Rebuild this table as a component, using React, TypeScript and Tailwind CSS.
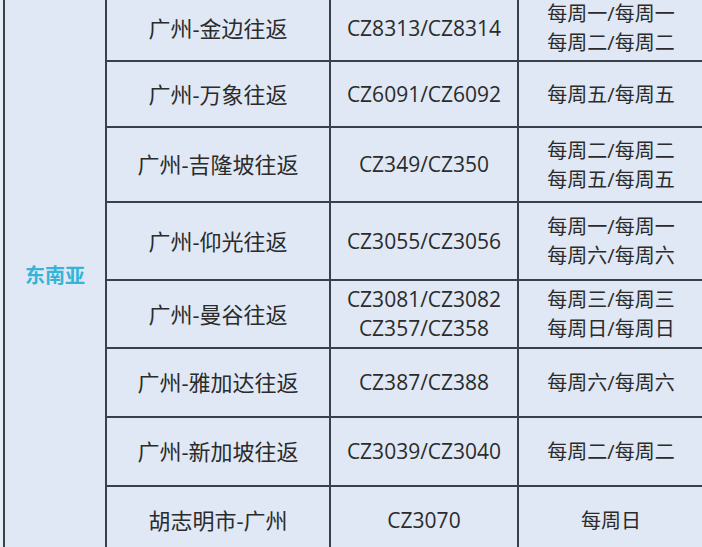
type Route = {
  route: string;
  flights: string[];
  days: string[];
  height: string;
};

const routes: Route[] = [
  { route: '广州-金边往返', flights: ['CZ8313/CZ8314'], days: ['每周一/每周一', '每周二/每周二'], height: 'h-[64px]' },
  { route: '广州-万象往返', flights: ['CZ6091/CZ6092'], days: ['每周五/每周五'], height: 'h-[64px]' },
  { route: '广州-吉隆坡往返', flights: ['CZ349/CZ350'], days: ['每周二/每周二', '每周五/每周五'], height: 'h-[73px]' },
  { route: '广州-仰光往返', flights: ['CZ3055/CZ3056'], days: ['每周一/每周一', '每周六/每周六'], height: 'h-[76px]' },
  { route: '广州-曼谷往返', flights: ['CZ3081/CZ3082', 'CZ357/CZ358'], days: ['每周三/每周三', '每周日/每周日'], height: 'h-[66px]' },
  { route: '广州-雅加达往返', flights: ['CZ387/CZ388'], days: ['每周六/每周六'], height: 'h-[67px]' },
  { route: '广州-新加坡往返', flights: ['CZ3039/CZ3040'], days: ['每周二/每周二'], height: 'h-[67px]' },
  { route: '胡志明市-广州', flights: ['CZ3070'], days: ['每周日'], height: 'h-[66px]' },
];

const cell = 'bg-[#dfe8f4] flex flex-col items-center justify-center text-center text-[#2b2b2b]';

export default function App() {
  return (
    <div
      className="w-[702px] h-[547px] overflow-hidden bg-[#e6eef8]"
      style={{ fontFamily: '"Open Sans", "Noto Sans CJK SC", sans-serif' }}
    >
      <div className="ml-[3px] -mt-[6px] w-[720px] grid grid-cols-[100px_222px_186px_1fr] gap-[2px] p-[2px] bg-[#38404a]">
        <div className={`${cell} row-span-8`}>
          <span className="text-[20px] font-bold text-[#35b4d8] mt-[2px]">东南亚</span>
        </div>
        {routes.map(r => (
          <div key={r.route} className="contents">
            <div className={`${cell} ${r.height} text-[22px]`}>{r.route}</div>
            <div className={`${cell} ${r.height} text-[21px] leading-[29px]`}>
              {r.flights.map(f => (
                <span key={f}>{f}</span>
              ))}
            </div>
            <div className={`${cell} ${r.height} text-[20px] leading-[29px] pr-[18px]`}>
              {r.days.map(d => (
                <span key={d}>{d}</span>
              ))}
            </div>
          </div>
        ))}
      </div>
    </div>
  );
}
